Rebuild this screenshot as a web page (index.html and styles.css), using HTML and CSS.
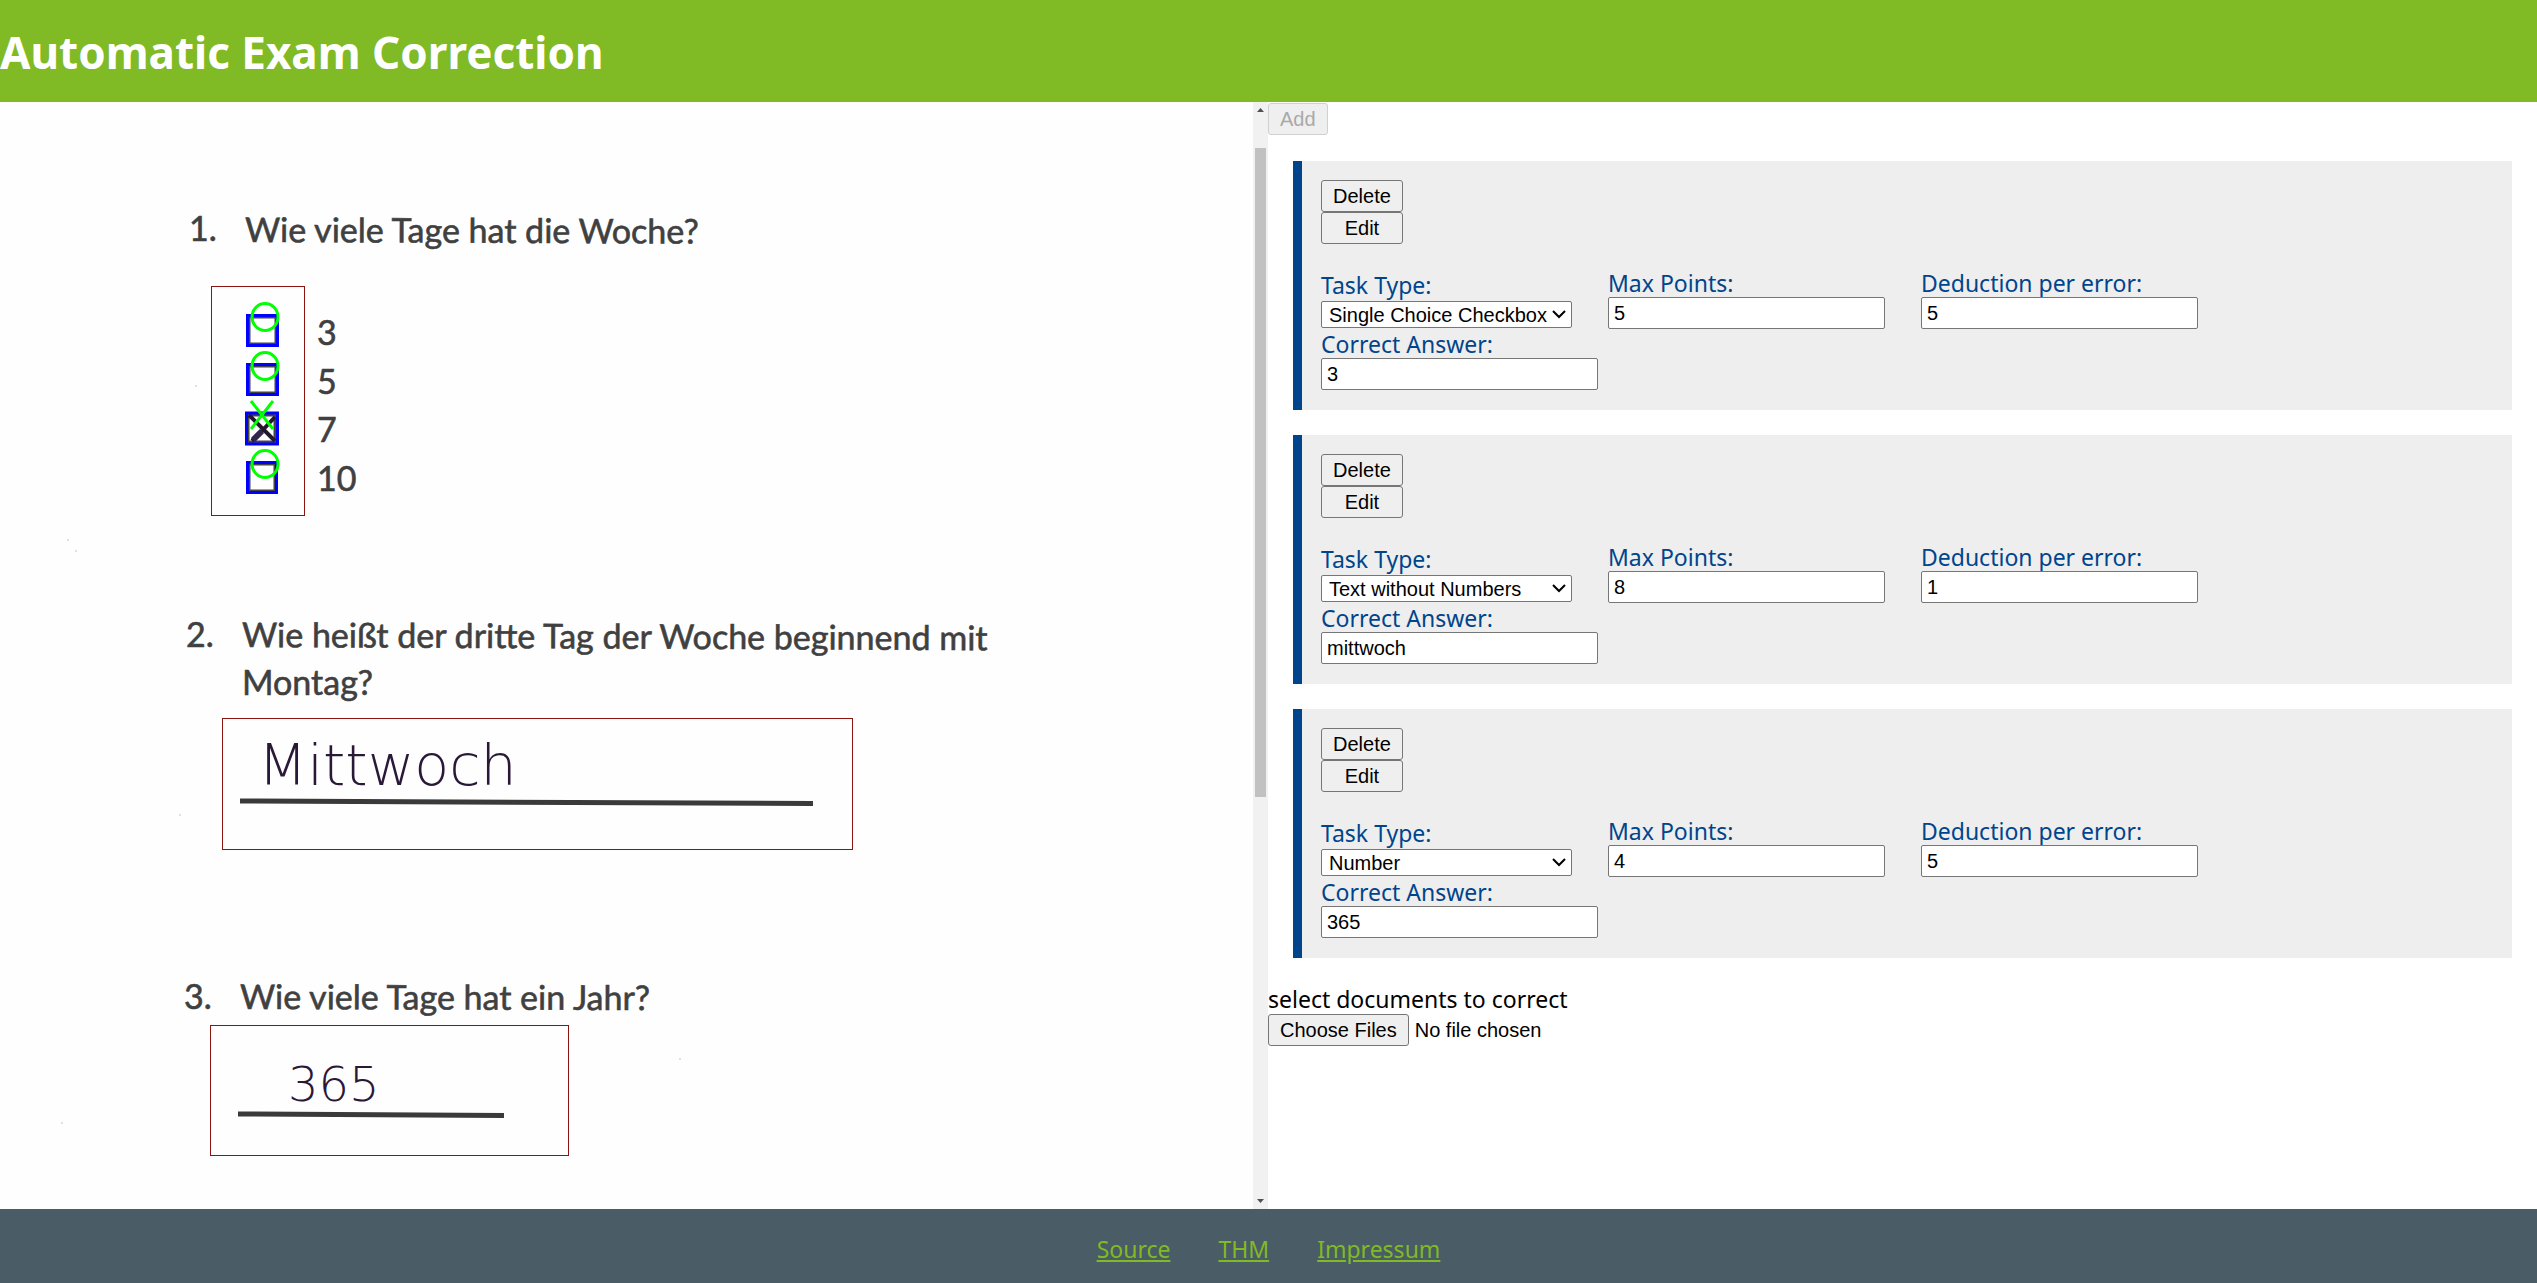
FILE: index.html
```html
<!DOCTYPE html>
<html lang="en">
<head>
<meta charset="utf-8">
<title>Automatic Exam Correction</title>
<link rel="stylesheet" href="styles.css">
</head>
<body>
<header class="header"><h1 class="title">Automatic Exam Correction</h1></header>
<main class="main">
  <section class="scan" aria-label="Exam sheet">
    <svg class="sheet" viewBox="0 102 1253 1107">
      <g class="speck">
        <circle cx="196" cy="386" r="1"/><circle cx="76" cy="551" r="1"/><circle cx="180" cy="815" r="1"/>
        <circle cx="680" cy="1059" r="1"/><circle cx="62" cy="1123" r="1"/><circle cx="68" cy="540" r="1"/>
      </g>
      <g class="print">
        <text x="189" y="241">1.</text>
        <text x="245" y="242" transform="rotate(0.2 245 242)">Wie viele Tage hat die Woche?</text>
        <text x="317" y="345">3</text>
        <text x="317" y="394">5</text>
        <text x="317" y="442">7</text>
        <text x="317" y="491">10</text>
        <text x="186" y="647">2.</text>
        <text x="242" y="647" transform="rotate(0.25 243 647)">Wie heißt der dritte Tag der Woche beginnend mit</text>
        <text x="242" y="695">Montag?</text>
        <text x="184" y="1009">3.</text>
        <text x="240" y="1009" transform="rotate(0.15 241 1009)">Wie viele Tage hat ein Jahr?</text>
      </g>
      <g class="box">
        <path d="M249 317h27v27h-27zM249 366h27v27h-27zM248 415h27v27h-27zM249 464h26v27h-26z"/>
      </g>
      <path class="cross" d="M249 415L275 441M275 417Q263 430 252 441"/>
      <path class="smudge" d="M253 440L262 431"/>
      <g class="found">
        <path d="M247.500 315.500h30v30h-30zM247.500 364.500h30v30h-30zM246.500 413h31v31h-31zM247.500 462.500h29v30h-29z"/>
      </g>
      <g class="mark">
        <ellipse cx="265" cy="317" rx="13" ry="13.500"/>
        <ellipse cx="265" cy="366" rx="13" ry="13.500"/>
        <ellipse cx="265" cy="464" rx="13" ry="13.500"/>
        <path d="M251 401L273 429M273 401L251 429"/>
      </g>
      <g class="region">
        <rect x="211.500" y="286.500" width="93" height="229"/>
        <rect x="222.500" y="718.500" width="630" height="131"/>
        <rect x="210.500" y="1025.500" width="358" height="130"/>
      </g>
      <path class="rule" d="M240 801L813 803.500M238 1114L504 1115.500"/>
      <g class="hand">
        <text class="word" x="258" y="785">Mittwoch</text>
        <text class="number" x="288" y="1101">365</text>
      </g>
    </svg>
  </section>
  <div class="scrollbar" aria-hidden="true">
    <svg class="arrow" viewBox="0 0 15 15"><path d="M4 10L7.500 6L11 10z"/></svg>
    <div class="track"><div class="thumb"></div></div>
    <svg class="arrow" viewBox="0 0 15 15"><path d="M4 5L7.500 9L11 5z"/></svg>
  </div>
  <section class="panel">
    <button class="button add" type="button" disabled>Add</button>
    <div class="tasks">
      <form class="task">
        <div class="actions"><button class="button" type="button">Delete</button><button class="button" type="button">Edit</button></div>
        <div class="fields">
          <div class="field"><label for="type1">Task Type:</label><select id="type1"><option>Single Choice Checkbox</option></select></div>
          <div class="field"><label for="max1">Max Points:</label><input id="max1" type="text" value="5"></div>
          <div class="field"><label for="ded1">Deduction per error:</label><input id="ded1" type="text" value="5"></div>
        </div>
        <div class="field"><label for="ans1">Correct Answer:</label><input id="ans1" type="text" value="3"></div>
      </form>
      <form class="task">
        <div class="actions"><button class="button" type="button">Delete</button><button class="button" type="button">Edit</button></div>
        <div class="fields">
          <div class="field"><label for="type2">Task Type:</label><select id="type2"><option>Text without Numbers</option></select></div>
          <div class="field"><label for="max2">Max Points:</label><input id="max2" type="text" value="8"></div>
          <div class="field"><label for="ded2">Deduction per error:</label><input id="ded2" type="text" value="1"></div>
        </div>
        <div class="field"><label for="ans2">Correct Answer:</label><input id="ans2" type="text" value="mittwoch"></div>
      </form>
      <form class="task">
        <div class="actions"><button class="button" type="button">Delete</button><button class="button" type="button">Edit</button></div>
        <div class="fields">
          <div class="field"><label for="type3">Task Type:</label><select id="type3"><option>Number</option></select></div>
          <div class="field"><label for="max3">Max Points:</label><input id="max3" type="text" value="4"></div>
          <div class="field"><label for="ded3">Deduction per error:</label><input id="ded3" type="text" value="5"></div>
        </div>
        <div class="field"><label for="ans3">Correct Answer:</label><input id="ans3" type="text" value="365"></div>
      </form>
    </div>
    <div class="upload"><label for="docs">select documents to correct</label><input class="files" id="docs" type="file" multiple></div>
  </section>
</main>
<footer class="footer"><a href="#source">Source</a><a href="#thm">THM</a><a href="#impressum">Impressum</a></footer>
</body>
</html>
```
FILE: styles.css
```css
* { box-sizing: border-box; }
body {
  margin: 0;
  min-height: 100vh;
  display: flex;
  flex-direction: column;
  font: 23px/32px "Noto Sans", sans-serif;
  color: #000;
  background: #fff;
}
.header { background: #80ba24; padding: 20px 0 18px; }
.title { margin: 0; font-size: 44px; line-height: 64px; font-weight: 700; color: #fff; }
.main { flex: 1; display: grid; grid-template-columns: minmax(0, 1253fr) 15px minmax(0, 1269fr); }
.scan { background: #fffeff; overflow: hidden; }
.sheet { display: block; width: 100%; height: auto; }
.print { font-family: Lato, sans-serif; font-size: 34px; fill: #404040; stroke: #404040; stroke-width: 0.6; }
.speck { fill: #d8d4d8; }
.box { fill: #fff; stroke: #444; stroke-width: 3; }
.cross { fill: none; stroke: #221a2c; stroke-width: 4; }
.smudge { stroke: #33264a; stroke-width: 6; }
.found { fill: none; stroke: #00f; stroke-width: 3; }
.mark { fill: none; stroke: #0f0; stroke-width: 3; }
.region { fill: none; stroke: #8b1410; stroke-width: 1; }
.rule { stroke: #3a3a3a; stroke-width: 5; }
.hand { font-family: "DejaVu Sans Light", "DejaVu Sans", sans-serif; font-weight: 200; fill: #2a1838; }
.word { font-size: 57px; }
.number { font-size: 48px; }

.scrollbar { display: flex; flex-direction: column; background: #f1f1f1; }
.arrow { width: 15px; height: 15px; fill: #505050; }
.track { flex: 1; padding: 31px 2px 0; }
.thumb { height: 62%; background: #c1c1c1; }

.panel { padding-top: 1px; }
.button {
  display: block;
  height: 32px;
  padding: 0 11px;
  border: 1px solid #767676;
  border-radius: 3px;
  background: #efefef;
  color: #000;
  font: 20px/24px "Liberation Sans", Arial, sans-serif;
}
.add { color: #a9a9a9; border-color: #d0d0d0; }
.tasks { display: flex; flex-direction: column; gap: 25px; margin: 26px 25px; }
.task {
  padding: 19px 19px 20px;
  border-left: 9px solid #00458c;
  background: #eee;
  color: #00458c;
}
.actions { display: inline-flex; flex-direction: column; margin-bottom: 27px; vertical-align: top; }
.fields { display: flex; align-items: flex-end; gap: 36px; margin-bottom: 3px; }
.field { display: flex; flex-direction: column; align-items: flex-start; }
.field label { line-height: 24px; margin-bottom: 2px; }
.field input, .field select {
  border: 1px solid #767676;
  border-radius: 2px;
  background: #fff;
  color: #000;
  font: 20px/24px "Liberation Sans", Arial, sans-serif;
}
.field input { width: 277px; height: 32px; padding: 0 5px; }
.field select {
  width: 251px;
  height: 27px;
  margin: 2px 0 1px;
  padding: 0 7px;
  appearance: none;
  background: #fff url("data:image/svg+xml,%3Csvg xmlns='http://www.w3.org/2000/svg' width='14' height='9'%3E%3Cpath d='M1 1l6 6 6-6' fill='none' stroke='%23000' stroke-width='2'/%3E%3C/svg%3E") no-repeat right 5px center;
}
.upload { display: flex; flex-direction: column; align-items: flex-start; }
.upload label { line-height: 30px; }
.files { font: 20px/24px "Liberation Sans", Arial, sans-serif; }
.files::file-selector-button {
  height: 32px;
  margin: 0 6px 0 0;
  padding: 0 11px;
  border: 1px solid #767676;
  border-radius: 3px;
  background: #efefef;
  font: 20px/24px "Liberation Sans", Arial, sans-serif;
}
.footer { display: flex; justify-content: center; gap: 48px; padding: 24px 0 18px; background: #4a5c66; }
.footer a { color: #80ba24; }
```
